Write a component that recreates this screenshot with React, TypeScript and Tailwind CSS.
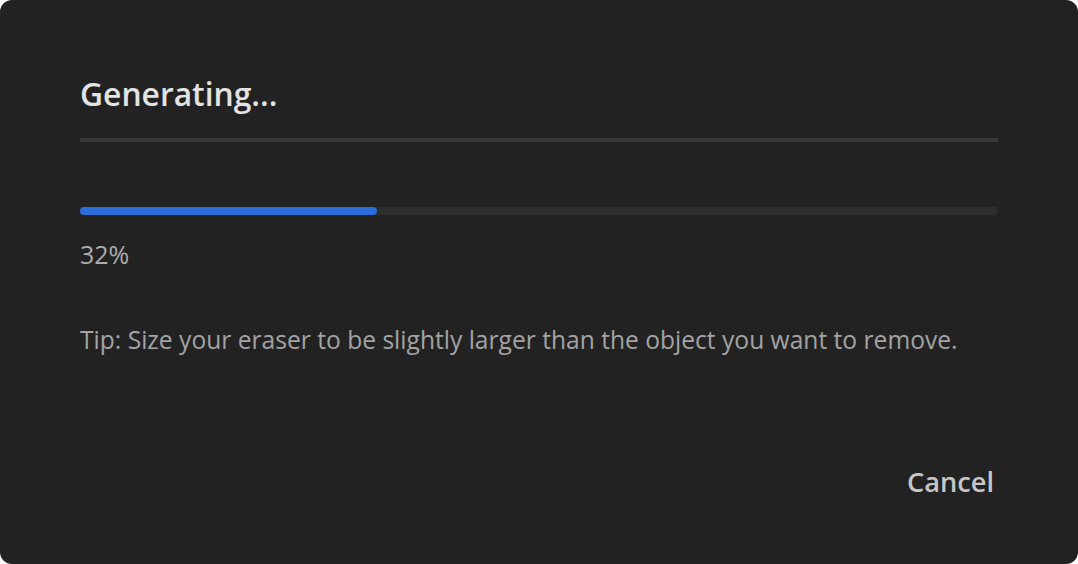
export default function App() {
  return (
    <div className="h-[564px] w-[1078px] bg-white" style={{ fontFamily: '"Open Sans", "Noto Sans", sans-serif' }}>
      <div className="flex h-full w-full flex-col rounded-[12px] bg-[#222222] px-[80px] pt-[74px]">
        <h1 className="text-[31.8px] font-semibold leading-[40px] text-[#e3e3e3]">Generating...</h1>
        <div className="mt-[24px] h-[4px] w-full bg-[#393939]" />
        <div className="mt-[65px] h-[8px] w-full rounded-full bg-[#2e2e2e]">
          <div className="h-full w-[32.4%] rounded-full bg-[#2b6ddb]" />
        </div>
        <div className="mt-[23px] text-[25px] leading-[32px] text-[#adadad]">32%</div>
        <p className="mt-[54px] text-[24.6px] leading-[32px] text-[#a3a3a3]">
          Tip: Size your eraser to be slightly larger than the object you want to remove.
        </p>
        <div className="mt-[108px] flex justify-end pr-[4px]">
          <button className="text-[27.2px] font-semibold leading-[36px] text-[#c6c6c6]">Cancel</button>
        </div>
      </div>
    </div>
  );
}
